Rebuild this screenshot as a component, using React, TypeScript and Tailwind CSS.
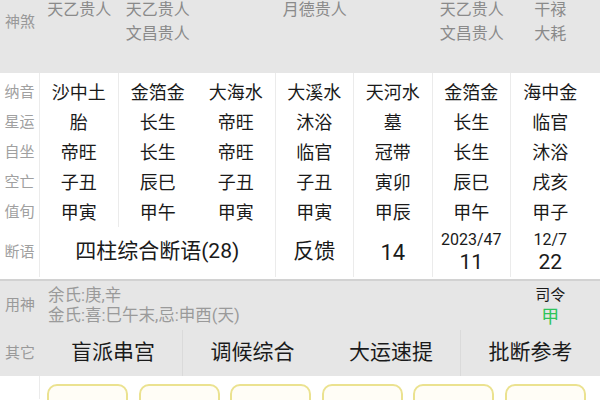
import React from 'react';

const COLS = 'grid grid-cols-[40px_repeat(7,78.5px)]';

// 神煞 row (top is scrolled off a little)
const shensha: string[][] = [
  ['天乙贵人'],
  ['天乙贵人', '文昌贵人'],
  [],
  ['月德贵人'],
  [],
  ['天乙贵人', '文昌贵人'],
  ['干禄', '大耗'],
];

const labels = ['纳音', '星运', '自坐', '空亡', '值旬'];

const pillars: string[][] = [
  ['沙中土', '胎', '帝旺', '子丑', '甲寅'],
  ['金箔金', '长生', '长生', '辰巳', '甲午'],
  ['大海水', '帝旺', '帝旺', '子丑', '甲寅'],
  ['大溪水', '沐浴', '临官', '子丑', '甲寅'],
  ['天河水', '墓', '冠带', '寅卯', '甲辰'],
  ['金箔金', '长生', '长生', '辰巳', '甲午'],
  ['海中金', '临官', '沐浴', '戌亥', '甲子'],
];

// which pillar columns carry a divider on their right side
const dividerAfter = [true, false, true, true, true, true, false];

const others = ['盲派串宫', '调候综合', '大运速提', '批断参考'];

export default function App() {
  return (
    <div className="w-[600px] h-[400px] overflow-hidden bg-white font-['Roboto','Noto_Sans_CJK_SC',sans-serif] text-[#1a1a1a]">
      {/* 神煞 */}
      <div className={`${COLS} h-[73px] bg-[#e6e6e6] overflow-hidden`}>
        <div className="pt-[12px] text-center text-[15px] leading-[20px] text-[#999]">神煞</div>
        {shensha.map((lines, i) => (
          <div key={i} className="-mt-[2px] flex flex-col items-center text-[16px] leading-[24px] text-[#8a8a8a]">
            {lines.map((l, j) => (
              <span key={j}>{l}</span>
            ))}
          </div>
        ))}
      </div>

      {/* 纳音 .. 值旬 */}
      <div className={COLS}>
        <div className="flex flex-col pt-[4px] border-r border-[#ebebeb]">
          {labels.map((l) => (
            <div key={l} className="h-[30px] flex items-center justify-center text-[15px] text-[#a0a0a0]">
              {l}
            </div>
          ))}
        </div>
        {pillars.map((col, i) => (
          <div key={i} className={`flex flex-col pt-[4px] ${dividerAfter[i] ? 'border-r border-[#ebebeb]' : ''}`}>
            {col.map((v, j) => (
              <div key={j} className="h-[30px] flex items-center justify-center text-[18px]">
                {v}
              </div>
            ))}
          </div>
        ))}
      </div>

      {/* 断语 */}
      <div className={`${COLS} h-[54px] pb-[2px] border-b-2 border-[#d2d2d2]`}>
        <div className="flex items-center justify-center border-r border-[#ebebeb] text-[15px] text-[#a0a0a0]">断语</div>
        <div className="col-span-3 flex items-center justify-center border-r border-[#ebebeb] text-[21px]">四柱综合断语(28)</div>
        <div className="flex items-center justify-center border-r border-[#ebebeb] text-[21px]">反馈</div>
        <div className="flex items-center justify-center border-r border-[#ebebeb] text-[22px]">14</div>
        <div className="flex flex-col items-center justify-center border-r border-[#ebebeb]">
          <span className="text-[16px] leading-[20px]">2023/47</span>
          <span className="text-[21px] leading-[24px]">11</span>
        </div>
        <div className="flex flex-col items-center justify-center">
          <span className="text-[16px] leading-[20px]">12/7</span>
          <span className="text-[21px] leading-[24px]">22</span>
        </div>
      </div>

      {/* 用神 */}
      <div className="grid grid-cols-[40px_1fr_78.5px_10.5px] h-[49px] bg-[#e6e6e6]">
        <div className="flex items-center justify-center text-[15px] text-[#999]">用神</div>
        <div className="flex flex-col justify-center pl-[8px] text-[16.5px] leading-[20px] text-[#9a9a9a]">
          <span>余氏:庚,辛</span>
          <span>金氏:喜:巳午末,忌:申酉(天)</span>
        </div>
        <div className="flex flex-col items-center justify-center">
          <span className="text-[15px] leading-[22px]">司令</span>
          <span className="text-[18px] leading-[22px] text-[#2fc45a]">甲</span>
        </div>
        <div />
      </div>

      {/* 其它 */}
      <div className="grid grid-cols-[40px_4px_repeat(4,1fr)] h-[46px] bg-[#e6e6e6]">
        <div className="flex items-center justify-center text-[15px] text-[#999]">其它</div>
        <div />
        {others.map((o, i) => (
          <div
            key={o}
            className={`flex items-center justify-center text-[21px] ${i % 2 === 0 ? 'border-r border-[#dadada]' : ''}`}
          >
            {o}
          </div>
        ))}
      </div>

      {/* bottom buttons */}
      <div className="flex h-[23px]">
        <div className="w-[40px] border-r border-[#ebebeb]" />
        <div className="flex gap-[10.5px] pl-[7px] pt-[8px]">
          {Array.from({ length: 6 }).map((_, i) => (
            <div key={i} className="w-[81px] h-[40px] rounded-[10px] border-2 border-[#ebe290] bg-[#fffdf6]" />
          ))}
        </div>
      </div>
    </div>
  );
}
